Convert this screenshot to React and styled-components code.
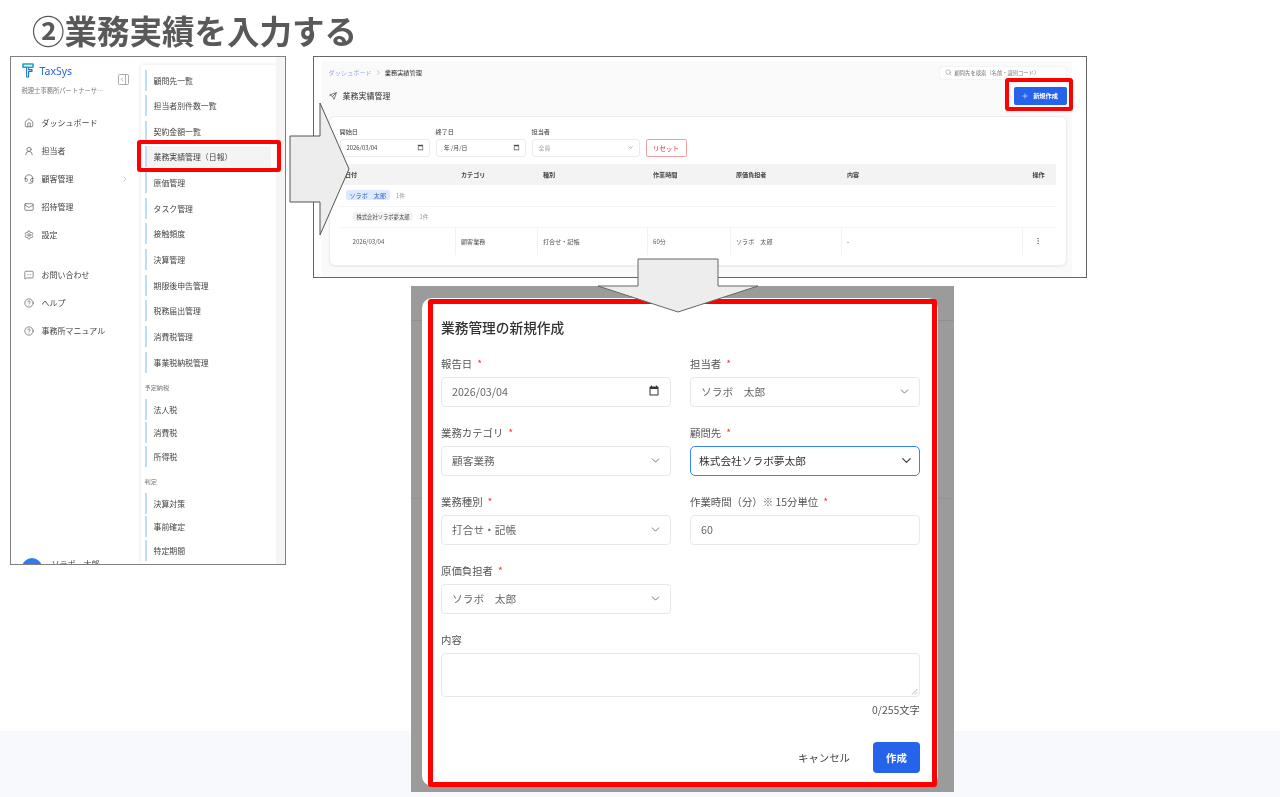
import React from 'react'
import styled, { createGlobalStyle } from 'styled-components'
import {
  House, UserRound, Headset, Mail, Settings, MessageSquareMore, CircleHelp,
  ChevronRight, ChevronDown, Send, Search, Plus, EllipsisVertical
} from 'lucide-react'

const GlobalStyle = createGlobalStyle`
  * { box-sizing: border-box; }
  html, body { margin: 0; padding: 0; background: #fff; }
  body { font-family: "Noto Sans CJK JP", "Noto Sans", sans-serif; color: #333; }
`

// the whole slide is a scaled capture, so everything is slightly soft
const Slide = styled.div`
  position: relative;
  width: 1280px;
  height: 797px;
  overflow: hidden;
  background: #fff;
  filter: blur(0.3px);
`
const Band = styled.div`
  position: absolute;
  left: 0;
  right: 0;
  bottom: 0;
  height: 66px;
  background: #f7f9fd;
`
const Heading = styled.h1`
  position: absolute;
  left: 32px;
  top: 6px;
  margin: 0;
  font-size: 32.5px;
  line-height: 47px;
  font-weight: 700;
  color: #595959;
  white-space: nowrap;
`

/* left screenshot: sidebar */
const SideWindow = styled.div`
  position: absolute;
  left: 10px;
  top: 56px;
  width: 276px;
  height: 509px;
  border: 1.5px solid #808080;
  display: flex;
  overflow: hidden;
  background: #fff;
`
const Sidebar = styled.div`
  width: 129.5px;
  flex: none;
  padding: 5.5px 0 0 10.5px;
  display: flex;
  flex-direction: column;
`
const BrandRow = styled.div`
  display: flex;
  align-items: center;
  height: 16px;
  gap: 6px;
  color: #2563eb;
  font-family: "Noto Sans", sans-serif;
  font-size: 10.5px;
`
const CollapseButton = styled.div`
  margin-left: auto;
  margin-right: 12px;
  margin-top: 18px;
  color: #999;
  display: flex;
`
const OfficeName = styled.div`
  margin-top: 6px;
  height: 11px;
  line-height: 11px;
  font-size: 6.3px;
  color: #777;
  white-space: nowrap;
`
const NavList = styled.div`
  margin-top: ${p => p.$top}px;
  display: flex;
  flex-direction: column;
`
const NavRow = styled.div`
  height: 28px;
  padding-left: 2px;
  display: flex;
  align-items: center;
  gap: 8px;
  font-size: 8px;
  color: #444;
  svg { flex: none; color: #555; }
`
const NavArrow = styled.span`
  margin-left: auto;
  margin-right: 12px;
  display: flex;
  svg { color: #888; }
`
const NavDivider = styled.div`
  margin: 6px 0 0 0;
  width: 108px;
  height: 1px;
  background: #f0f0f0;
`
const UserRow = styled.div`
  margin-top: 213px;
  display: flex;
  gap: 10px;
  font-size: 8px;
  line-height: 12px;
  color: #444;
`
const Avatar = styled.div`
  width: 20px;
  height: 20px;
  border-radius: 50%;
  background: #2f7bf0;
`
const Flyout = styled.div`
  width: 135px;
  flex: none;
  margin-top: 8px;
  padding: 4.5px 5px 0 4px;
  background: #fff;
  border-radius: 3px 3px 0 0;
  box-shadow: 0 0 4px rgba(0, 0, 0, 0.12);
`
const FlyoutGroup = styled.div`
  display: flex;
  flex-direction: column;
  gap: ${p => p.$gap}px;
`
const FlyoutItem = styled.div`
  height: 21px;
  border-left: 2px solid #bcdcfb;
  padding-left: 7px;
  display: flex;
  align-items: center;
  font-size: 7.9px;
  color: #444;
  background: ${p => (p.$active ? '#f4f4f4' : 'transparent')};
`
const FlyoutSection = styled.div`
  margin-top: 10.5px;
  margin-bottom: 5.7px;
  height: 10px;
  line-height: 10px;
  font-size: 6.2px;
  color: #777;
`
const SideStrip = styled.div`
  flex: 1;
  background: #f5f5f5;
`

/* right screenshot: list page */
const ListWindow = styled.div`
  position: absolute;
  left: 313px;
  top: 56px;
  width: 774px;
  height: 222px;
  border: 1.5px solid #666;
  padding: 3.5px 14.5px 0 7.5px;
  background: #fff;
`
const ListPage = styled.div`
  height: 100%;
  background: #fafafa;
  padding: 6px 5px 0 7px;
`
const TopBar = styled.div`
  display: flex;
  align-items: center;
  justify-content: space-between;
  height: 12px;
  padding-right: 1px;
`
const Breadcrumb = styled.div`
  display: flex;
  align-items: center;
  gap: 3px;
  font-size: 6.2px;
  color: #333;
  span:first-child { color: #93a9f0; }
  svg { color: #777; }
`
const SearchBox = styled.div`
  width: 126px;
  height: 12px;
  background: #fff;
  border-radius: 2px;
  box-shadow: 0 0 1px rgba(0, 0, 0, 0.25);
  padding-left: 5px;
  display: flex;
  align-items: center;
  gap: 3px;
  font-size: 5.3px;
  color: #777;
  white-space: nowrap;
  svg { color: #777; flex: none; }
`
const TitleRow = styled.div`
  margin-top: 8px;
  display: flex;
  align-items: center;
  justify-content: space-between;
`
const PageTitle = styled.div`
  display: flex;
  align-items: center;
  gap: 6px;
  font-size: 8px;
  color: #333;
  svg { color: #444; }
`
const PrimarySmall = styled.div`
  width: 53px;
  height: 18px;
  background: #2563eb;
  border-radius: 2px;
  color: #fff;
  font-size: 6.2px;
  font-weight: 700;
  display: flex;
  align-items: center;
  justify-content: center;
  gap: 4px;
  padding-right: 1px;
`
const Card = styled.div`
  margin-top: 11px;
  height: 150px;
  background: #fff;
  border: 1px solid #ececec;
  border-radius: 6px;
  padding: 11px 10px 0 10px;
  box-shadow: 0 1px 2px rgba(0, 0, 0, 0.05);
`
const Filters = styled.div`
  display: flex;
  align-items: flex-end;
  gap: 6px;
`
const FilterField = styled.div`
  width: ${p => p.$width}px;
  display: flex;
  flex-direction: column;
  gap: 3px;
`
const FilterLabel = styled.div`
  height: 8px;
  line-height: 8px;
  font-size: 6.2px;
  color: #333;
`
const FilterInput = styled.div`
  height: 18px;
  border: 1px solid #ececec;
  border-radius: 3px;
  padding: 0 5px 0 6px;
  display: flex;
  align-items: center;
  justify-content: space-between;
  font-size: 5.9px;
  color: ${p => (p.$muted ? '#aaa' : '#444')};
  svg { color: #444; }
`
const ResetButton = styled.div`
  width: 41px;
  height: 18px;
  border: 1px solid #f3a0a5;
  border-radius: 2px;
  color: #d32f38;
  font-size: 6.5px;
  display: flex;
  align-items: center;
  justify-content: center;
`
const Table = styled.div`
  margin-top: 7px;
`
const TableRow = styled.div`
  display: grid;
  grid-template-columns: 116px 82px 110px 83px 111px 181px 32px;
  height: ${p => p.$height}px;
  background: ${p => (p.$head ? '#f3f3f3' : '#fff')};
  font-size: 6.1px;
  font-weight: ${p => (p.$head ? 700 : 400)};
  color: ${p => (p.$head ? '#444' : '#555')};
`
const TableCell = styled.div`
  padding-left: ${p => p.$pad || 5.5}px;
  display: flex;
  align-items: center;
  border-right: 1px solid #f2f2f2;
  &:last-child { border-right: 0; }
`
const GroupRow = styled.div`
  height: ${p => p.$height}px;
  padding-left: ${p => p.$pad}px;
  display: flex;
  align-items: center;
  gap: 6px;
  border-bottom: 1px solid #f5f5f5;
  font-size: 5.8px;
  color: #999;
`
const Chip = styled.span`
  height: ${p => p.$height}px;
  padding: 0 4px;
  border-radius: 2px;
  display: flex;
  align-items: center;
  white-space: nowrap;
  font-size: ${p => p.$size}px;
  background: ${p => (p.$blue ? '#dbeafe' : '#f3f3f3')};
  color: ${p => (p.$blue ? '#2f5cb8' : '#444')};
`

/* create dialog */
const Backdrop = styled.div`
  position: absolute;
  left: 411px;
  top: 286px;
  width: 543px;
  height: 506px;
  padding: 12px 0 0 11px;
  background:
    linear-gradient(#909090, #909090) 0 34px / 100% 1px no-repeat,
    linear-gradient(#939393, #939393) 0 212px / 100% 1px no-repeat,
    #9b9b9b;
`
const Modal = styled.div`
  width: 516px;
  height: 488px;
  background: #fff;
  border-radius: 10px;
  padding: 19px 18px 0 19px;
`
const ModalTitle = styled.h2`
  margin: 0 0 19px;
  height: 20px;
  line-height: 20px;
  font-size: 13.7px;
  font-weight: 500;
  color: #333;
`
const FormGrid = styled.div`
  display: grid;
  grid-template-columns: 230px 230px;
  column-gap: 19px;
  row-gap: 18px;
`
const FormField = styled.div`
  display: flex;
  flex-direction: column;
  gap: 5px;
  grid-column: ${p => (p.$wide ? '1 / -1' : 'auto')};
`
const Label = styled.label`
  height: 16px;
  line-height: 16px;
  font-size: 10.4px;
  color: #555;
  white-space: nowrap;
`
const Required = styled.span`
  margin-left: 5px;
  color: #e53935;
`
const Control = styled.div`
  height: 30px;
  border: ${p => (p.$focus ? '1.5px solid #3b82f6' : '1px solid #e8e8e8')};
  border-radius: ${p => (p.$focus ? 5 : 4)}px;
  padding: 0 ${p => (p.$focus ? 8 : 10)}px 2px ${p => (p.$focus ? 8 : 10)}px;
  display: flex;
  align-items: center;
  justify-content: space-between;
  font-size: 10.7px;
  color: ${p => (p.$focus ? '#333' : '#666')};
  svg { color: ${p => (p.$focus ? '#444' : '#666')}; flex: none; margin-right: ${p => (p.$focus ? -3 : -2)}px; }
`
const DateGlyph = styled.span`
  display: flex;
  svg { color: #333; margin-right: 0; }
`
const TextArea = styled.div`
  position: relative;
  height: 44px;
  border: 1px solid #e8e8e8;
  border-radius: 4px;
`
const ResizeGrip = styled.svg`
  position: absolute;
  right: 1px;
  bottom: 1px;
`
const Counter = styled.div`
  margin-top: 6px;
  height: 14px;
  line-height: 14px;
  text-align: right;
  font-size: 10.4px;
  color: #555;
`
const ModalFooter = styled.div`
  margin-top: 25px;
  display: flex;
  justify-content: flex-end;
  align-items: center;
  gap: 23px;
`
const CancelButton = styled.div`
  font-size: 10.4px;
  color: #444;
`
const CreateButton = styled.div`
  width: 47px;
  height: 31px;
  border-radius: 4px;
  background: #2563eb;
  color: #fff;
  font-size: 10.4px;
  font-weight: 700;
  display: flex;
  align-items: center;
  justify-content: center;
`

/* slide annotations */
const RedFrame = styled.div`
  position: absolute;
  left: ${p => p.$x}px;
  top: ${p => p.$y}px;
  width: ${p => p.$w}px;
  height: ${p => p.$h}px;
  border: ${p => p.$line}px solid #ff0000;
  border-radius: 3px;
`
const ArrowShape = styled.svg`
  position: absolute;
  left: 0;
  top: 0;
  pointer-events: none;
`

const CalendarIcon = ({ size }) => (
  <svg width={size} height={size} viewBox="0 0 24 24" fill="currentColor">
    <path d="M19 3h-1V1h-2v2H8V1H6v2H5c-1.1 0-2 .9-2 2v14c0 1.1.9 2 2 2h14c1.1 0 2-.9 2-2V5c0-1.1-.9-2-2-2zm0 16H5V8h14v11z" />
  </svg>
)

const LogoMark = () => (
  <svg width="12" height="15" viewBox="0 0 12 15" fill="none">
    <path d="M1 1h10v3.2H1z" stroke="#17a2c4" strokeWidth="1.6" strokeLinejoin="round" />
    <path d="M4.6 4.8V14H6.6V8.4H10V6.6H6.6V4.8" stroke="#1b74c9" strokeWidth="1.1" strokeLinejoin="round" />
  </svg>
)

const CollapseIcon = () => (
  <svg width="11" height="11" viewBox="0 0 11 11" fill="none" stroke="currentColor" strokeWidth="0.8">
    <rect x="0.5" y="0.5" width="10" height="10" rx="1" />
    <path d="M7.5 0.5v10M5 3.8 3.4 5.5 5 7.2" />
  </svg>
)

const mainNav = [
  { label: 'ダッシュボード', icon: House },
  { label: '担当者', icon: UserRound },
  { label: '顧客管理', icon: Headset, more: true },
  { label: '招待管理', icon: Mail },
  { label: '設定', icon: Settings },
]
const subNav = [
  { label: 'お問い合わせ', icon: MessageSquareMore },
  { label: 'ヘルプ', icon: CircleHelp },
  { label: '事務所マニュアル', icon: CircleHelp },
]
const flyoutMain = [
  '顧問先一覧', '担当者別件数一覧', '契約金額一覧', '業務実績管理（日報）', '原価管理', 'タスク管理',
  '接触頻度', '決算管理', '期限後申告管理', '税務届出管理', '消費税管理', '事業税納税管理',
]
const columns = ['日付', 'カテゴリ', '種別', '作業時間', '原価負担者', '内容', '操作']
const cells = ['2026/03/04', '顧客業務', '打合せ・記帳', '60分', 'ソラボ　太郎', '-']

const Field = ({ label, required, wide, children }) => (
  <FormField $wide={wide}>
    <Label>{label}{required && <Required>*</Required>}</Label>
    {children}
  </FormField>
)

const SelectControl = ({ value, focus }) => (
  <Control $focus={focus}>
    {value}
    <ChevronDown size={focus ? 15 : 13} strokeWidth={focus ? 2 : 1.6} />
  </Control>
)

const App = () => {
  return (
    <Slide>
      <GlobalStyle />
      <Band />
      <Heading>②業務実績を入力する</Heading>

      <SideWindow>
        <Sidebar>
          <BrandRow>
            <LogoMark />
            TaxSys
            <CollapseButton><CollapseIcon /></CollapseButton>
          </BrandRow>
          <OfficeName>税理士事務所パートナーサ…</OfficeName>
          <NavList $top={13}>
            {mainNav.map(item => (
              <NavRow key={item.label}>
                <item.icon size={10} strokeWidth={1.6} />
                {item.label}
                {item.more && <NavArrow><ChevronRight size={8} strokeWidth={1.4} /></NavArrow>}
              </NavRow>
            ))}
          </NavList>
          <NavDivider />
          <NavList $top={6}>
            {subNav.map(item => (
              <NavRow key={item.label}>
                <item.icon size={10} strokeWidth={1.6} />
                {item.label}
              </NavRow>
            ))}
          </NavList>
          <UserRow>
            <Avatar />
            ソラボ　太郎
          </UserRow>
        </Sidebar>
        <Flyout>
          <FlyoutGroup $gap={4.65}>
            {flyoutMain.map(label => (
              <FlyoutItem key={label} $active={label.startsWith('業務実績')}>{label}</FlyoutItem>
            ))}
          </FlyoutGroup>
          <FlyoutSection>予定納税</FlyoutSection>
          <FlyoutGroup $gap={2.5}>
            <FlyoutItem>法人税</FlyoutItem>
            <FlyoutItem>消費税</FlyoutItem>
            <FlyoutItem>所得税</FlyoutItem>
          </FlyoutGroup>
          <FlyoutSection>判定</FlyoutSection>
          <FlyoutGroup $gap={2.5}>
            <FlyoutItem>決算対策</FlyoutItem>
            <FlyoutItem>事前確定</FlyoutItem>
            <FlyoutItem>特定期間</FlyoutItem>
          </FlyoutGroup>
        </Flyout>
        <SideStrip />
      </SideWindow>

      <ListWindow>
        <ListPage>
          <TopBar>
            <Breadcrumb>
              <span>ダッシュボード</span>
              <ChevronRight size={7} strokeWidth={1.5} />
              <span>業務実績管理</span>
            </Breadcrumb>
            <SearchBox>
              <Search size={7} strokeWidth={1.5} />
              顧問先を検索（名前・識別コード）
            </SearchBox>
          </TopBar>
          <TitleRow>
            <PageTitle>
              <Send size={8} strokeWidth={2} />
              業務実績管理
            </PageTitle>
            <PrimarySmall>
              <Plus size={8} strokeWidth={1.6} />
              新規作成
            </PrimarySmall>
          </TitleRow>
          <Card>
            <Filters>
              <FilterField $width={90}>
                <FilterLabel>開始日</FilterLabel>
                <FilterInput>2026/03/04<CalendarIcon size={7} /></FilterInput>
              </FilterField>
              <FilterField $width={90}>
                <FilterLabel>終了日</FilterLabel>
                <FilterInput>&nbsp;年 /月/日<CalendarIcon size={7} /></FilterInput>
              </FilterField>
              <FilterField $width={108}>
                <FilterLabel>担当者</FilterLabel>
                <FilterInput $muted>全員<ChevronDown size={7} strokeWidth={1.5} /></FilterInput>
              </FilterField>
              <ResetButton>リセット</ResetButton>
            </Filters>
            <Table>
              <TableRow $head $height={21}>
                {columns.map((col, i) => <TableCell key={col} $pad={i === 6 ? 10 : 0}>{col}</TableCell>)}
              </TableRow>
              <GroupRow $height={22} $pad={6}>
                <Chip $blue $height={10} $size={6.1}>ソラボ　太郎</Chip>
                1件
              </GroupRow>
              <GroupRow $height={21} $pad={13}>
                <Chip $height={9} $size={5.3}>株式会社ソラボ夢太郎</Chip>
                1件
              </GroupRow>
              <TableRow $height={27}>
                {cells.map((cell, i) => <TableCell key={cell} $pad={i === 0 ? 13 : 0}>{cell}</TableCell>)}
                <TableCell $pad={11}><EllipsisVertical size={8} strokeWidth={1.6} /></TableCell>
              </TableRow>
            </Table>
          </Card>
        </ListPage>
      </ListWindow>

      <Backdrop>
        <Modal>
          <ModalTitle>業務管理の新規作成</ModalTitle>
          <FormGrid>
            <Field label="報告日" required>
              <Control>2026/03/04<DateGlyph><CalendarIcon size={12} /></DateGlyph></Control>
            </Field>
            <Field label="担当者" required>
              <SelectControl value="ソラボ　太郎" />
            </Field>
            <Field label="業務カテゴリ" required>
              <SelectControl value="顧客業務" />
            </Field>
            <Field label="顧問先" required>
              <SelectControl value="株式会社ソラボ夢太郎" focus />
            </Field>
            <Field label="業務種別" required>
              <SelectControl value="打合せ・記帳" />
            </Field>
            <Field label="作業時間（分）※ 15分単位" required>
              <Control>60</Control>
            </Field>
            <Field label="原価負担者" required>
              <SelectControl value="ソラボ　太郎" />
            </Field>
            <div />
            <Field label="内容" wide>
              <TextArea>
                <ResizeGrip width="7" height="7" viewBox="0 0 7 7">
                  <path d="M1 6.5 6.5 1M4 6.5 6.5 4" stroke="#999" strokeWidth="0.7" />
                </ResizeGrip>
              </TextArea>
            </Field>
          </FormGrid>
          <Counter>0/255文字</Counter>
          <ModalFooter>
            <CancelButton>キャンセル</CancelButton>
            <CreateButton>作成</CreateButton>
          </ModalFooter>
        </Modal>
      </Backdrop>

      <RedFrame $x={137} $y={140} $w={144} $h={32} $line={4} />
      <RedFrame $x={1005} $y={78} $w={68} $h={33} $line={4} />
      <RedFrame $x={428} $y={299} $w={509} $h={488} $line={5} />

      <ArrowShape width="1280" height="797" viewBox="0 0 1280 797">
        <polygon points="290,136 320,136 320,103 349,169 320,235 320,202 290,202" fill="#ededed" stroke="#555" strokeWidth="1" />
        <polygon points="638,259 718,259 718,286 758,286 678,312 598,286 638,286" fill="#ededed" stroke="#666" strokeWidth="1" />
      </ArrowShape>
    </Slide>
  )
}

export default App
